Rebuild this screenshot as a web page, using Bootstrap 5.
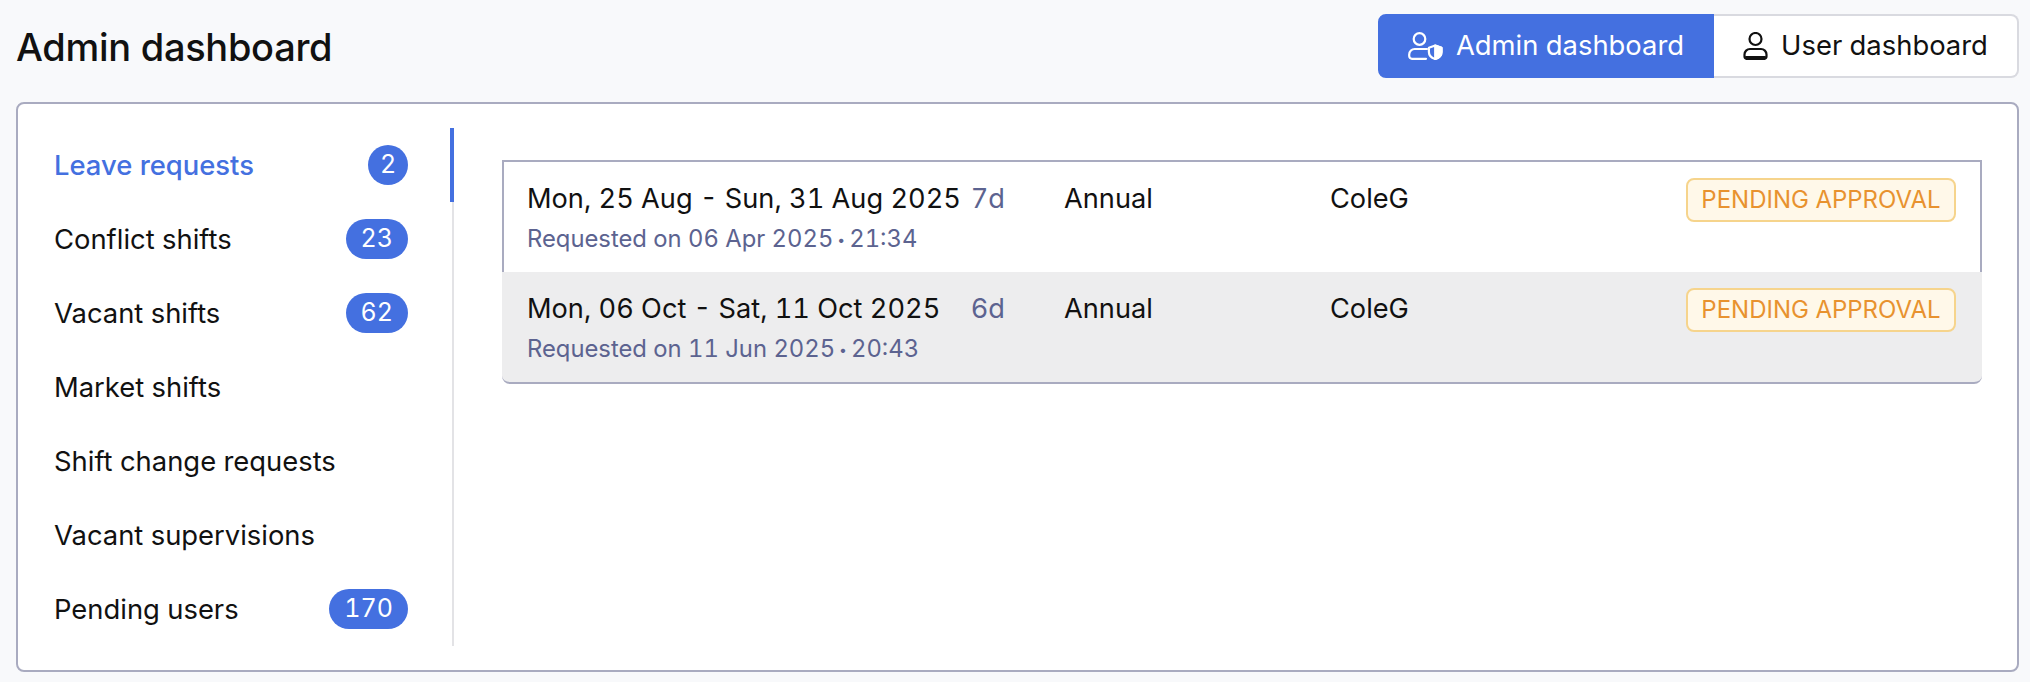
<!DOCTYPE html>
<html lang="en">
<head>
    <meta charset="UTF-8">
    <meta name="viewport" content="width=device-width, initial-scale=1.0">
    <title>Admin dashboard</title>
    <link href="https://cdn.jsdelivr.net/npm/bootstrap@5.3.0/dist/css/bootstrap.min.css" rel="stylesheet">
    <style>
        body {
            font-family: "Inter", "Liberation Sans", sans-serif;
            font-size: 27.4px;
            color: #111;
            background: #f8f9fb;
            font-variant-numeric: tabular-nums;
        }
        .page-wrap { padding: 14px 11px 11px 16px; height: 682px; }
        .page-head { height: 64px; margin-bottom: 24px; }
        .page-title { font-size: 38px; font-weight: 500; margin: 0; padding-top: 4px; letter-spacing: -0.3px; }
        .switch-btn {
            height: 64px;
            display: flex;
            align-items: center;
            justify-content: center;
            gap: 13px;
            white-space: nowrap;
            color: #111;
            background: #fff;
            border: 2px solid #d9dae0;
        }
        .switch-admin { width: 336px; background: #4470e0; border-color: #4470e0; color: #fff; border-radius: 8px 0 0 8px; }
        .switch-user { width: 305px; border-left: 0; border-radius: 0 8px 8px 0; }
        .main-box {
            height: 570px;
            background: #fff;
            border: 2px solid #a9abc0;
            border-radius: 8px;
            padding: 24px 35px 24px 0;
        }
        .side-menu { width: 436px; border-right: 2px solid #e3e3e6; flex: none; }
        .side-item {
            height: 74px;
            padding: 0 42px 0 36px;
            margin-right: -2px;
            border-right: 4px solid transparent;
        }
        .side-label { padding-top: 2px; }
        .side-item.is-active { color: #4470e0; font-weight: 500; border-right-color: #4470e0; }
        .count-pill {
            min-width: 40px;
            height: 40px;
            padding: 0 15px;
            border-radius: 20px;
            background: #4470e0;
            color: #fff;
            font-size: 25px;
            font-weight: 400;
            display: flex;
            align-items: center;
            justify-content: center;
        }
        .req-list { margin: 32px 0 0 48px; }
        .req-row { height: 112px; padding: 16px 26px 0 25px; }
        .req-first { border: solid #a9abc0; border-width: 2px 2px 0 2px; padding: 16px 24px 0 23px; }
        .req-last { background: #ededee; border-bottom: 2px solid #a9abc0; border-radius: 0 0 8px 8px; }
        .col-dates { width: 426px; flex: none; white-space: nowrap; }
        .col-days { width: 52px; flex: none; color: #5c6390; text-align: right; }
        .col-type { width: 266px; flex: none; margin-left: 59px; }
        .date-main { line-height: 32px; margin-top: 5px; font-size: 27.2px; }
        .date-sub { font-size: 23.8px; line-height: 28px; margin-top: 10px; color: #5c6390; }
        .status-tag {
            height: 44px;
            width: 270px;
            margin-left: auto;
            background: #fff8e9;
            border: 2px solid #f6d48c;
            border-radius: 8px;
            color: #e8922f;
            font-size: 24px;
            display: flex;
            align-items: center;
            justify-content: center;
        }
        .dot-sep { padding: 0 4px; font-size: 14px; vertical-align: 2px; }
    </style>
</head>
<body>
    <div class="page-wrap">
        <!-- Header -->
        <div class="page-head d-flex align-items-center justify-content-between">
            <h1 class="page-title">Admin dashboard</h1>
            <div class="d-flex">
                <div class="switch-btn switch-admin">
                    <svg width="35" height="28" viewBox="0 0 35 28" fill="none" stroke="#fff" stroke-width="2.200" stroke-linecap="round" stroke-linejoin="round">
                        <circle cx="11.500" cy="7" r="5.800"/>
                        <path d="M19 17H7a5.500 5.500 0 0 0-5.800 5.500v1.500a2.800 2.800 0 0 0 2.800 2.800h14"/>
                        <path d="M27.200 13.500l6.300 2.300v4.200c0 3.300-2.400 5.800-6.300 7-3.900-1.200-6.300-3.700-6.300-7v-4.200z"/>
                        <path d="M27.200 13.500l6.300 2.300v4.200c0 3.300-2.400 5.800-6.300 7z" fill="#fff"/>
                    </svg>
                    Admin dashboard
                </div>
                <div class="switch-btn switch-user">
                    <svg width="25" height="28" viewBox="0 0 25 28" fill="none" stroke="#111" stroke-width="2.200" stroke-linecap="round" stroke-linejoin="round">
                        <circle cx="12.500" cy="7" r="6"/>
                        <path d="M7 17h11a5.500 5.500 0 0 1 5.500 5.500v2a2.500 2.500 0 0 1-2.500 2.500H4a2.500 2.500 0 0 1-2.500-2.500v-2A5.500 5.500 0 0 1 7 17z"/>
                        <path d="M3 25h19"/>
                    </svg>
                    User dashboard
                </div>
            </div>
        </div>

        <!-- Main panel -->
        <div class="main-box d-flex">
            <div class="side-menu">
                <div class="side-item is-active d-flex align-items-center justify-content-between"><span class="side-label">Leave requests</span> <span class="count-pill px-0">2</span></div>
                <div class="side-item d-flex align-items-center justify-content-between"><span class="side-label">Conflict shifts</span> <span class="count-pill">23</span></div>
                <div class="side-item d-flex align-items-center justify-content-between"><span class="side-label">Vacant shifts</span> <span class="count-pill">62</span></div>
                <div class="side-item d-flex align-items-center justify-content-between"><span class="side-label">Market shifts</span></div>
                <div class="side-item d-flex align-items-center justify-content-between"><span class="side-label">Shift change requests</span></div>
                <div class="side-item d-flex align-items-center justify-content-between"><span class="side-label">Vacant supervisions</span></div>
                <div class="side-item d-flex align-items-center justify-content-between"><span class="side-label">Pending users</span> <span class="count-pill">170</span></div>
            </div>
            <div class="req-list flex-grow-1">
                <div class="req-row req-first d-flex">
                    <div class="col-dates">
                        <div class="date-main">Mon, 25 Aug - Sun, 31 Aug 2025</div>
                        <div class="date-sub">Requested on 06 Apr 2025<span class="dot-sep">•</span>21:34</div>
                    </div>
                    <div class="col-days date-main">7d</div>
                    <div class="col-type date-main">Annual</div>
                    <div class="date-main">ColeG</div>
                    <div class="status-tag">PENDING APPROVAL</div>
                </div>
                <div class="req-row req-last d-flex">
                    <div class="col-dates">
                        <div class="date-main">Mon, 06 Oct - Sat, 11 Oct 2025</div>
                        <div class="date-sub">Requested on 11 Jun 2025<span class="dot-sep">•</span>20:43</div>
                    </div>
                    <div class="col-days date-main">6d</div>
                    <div class="col-type date-main">Annual</div>
                    <div class="date-main">ColeG</div>
                    <div class="status-tag">PENDING APPROVAL</div>
                </div>
            </div>
        </div>
    </div>
    <script src="https://cdn.jsdelivr.net/npm/bootstrap@5.3.0/dist/js/bootstrap.bundle.min.js"></script>
</body>
</html>
